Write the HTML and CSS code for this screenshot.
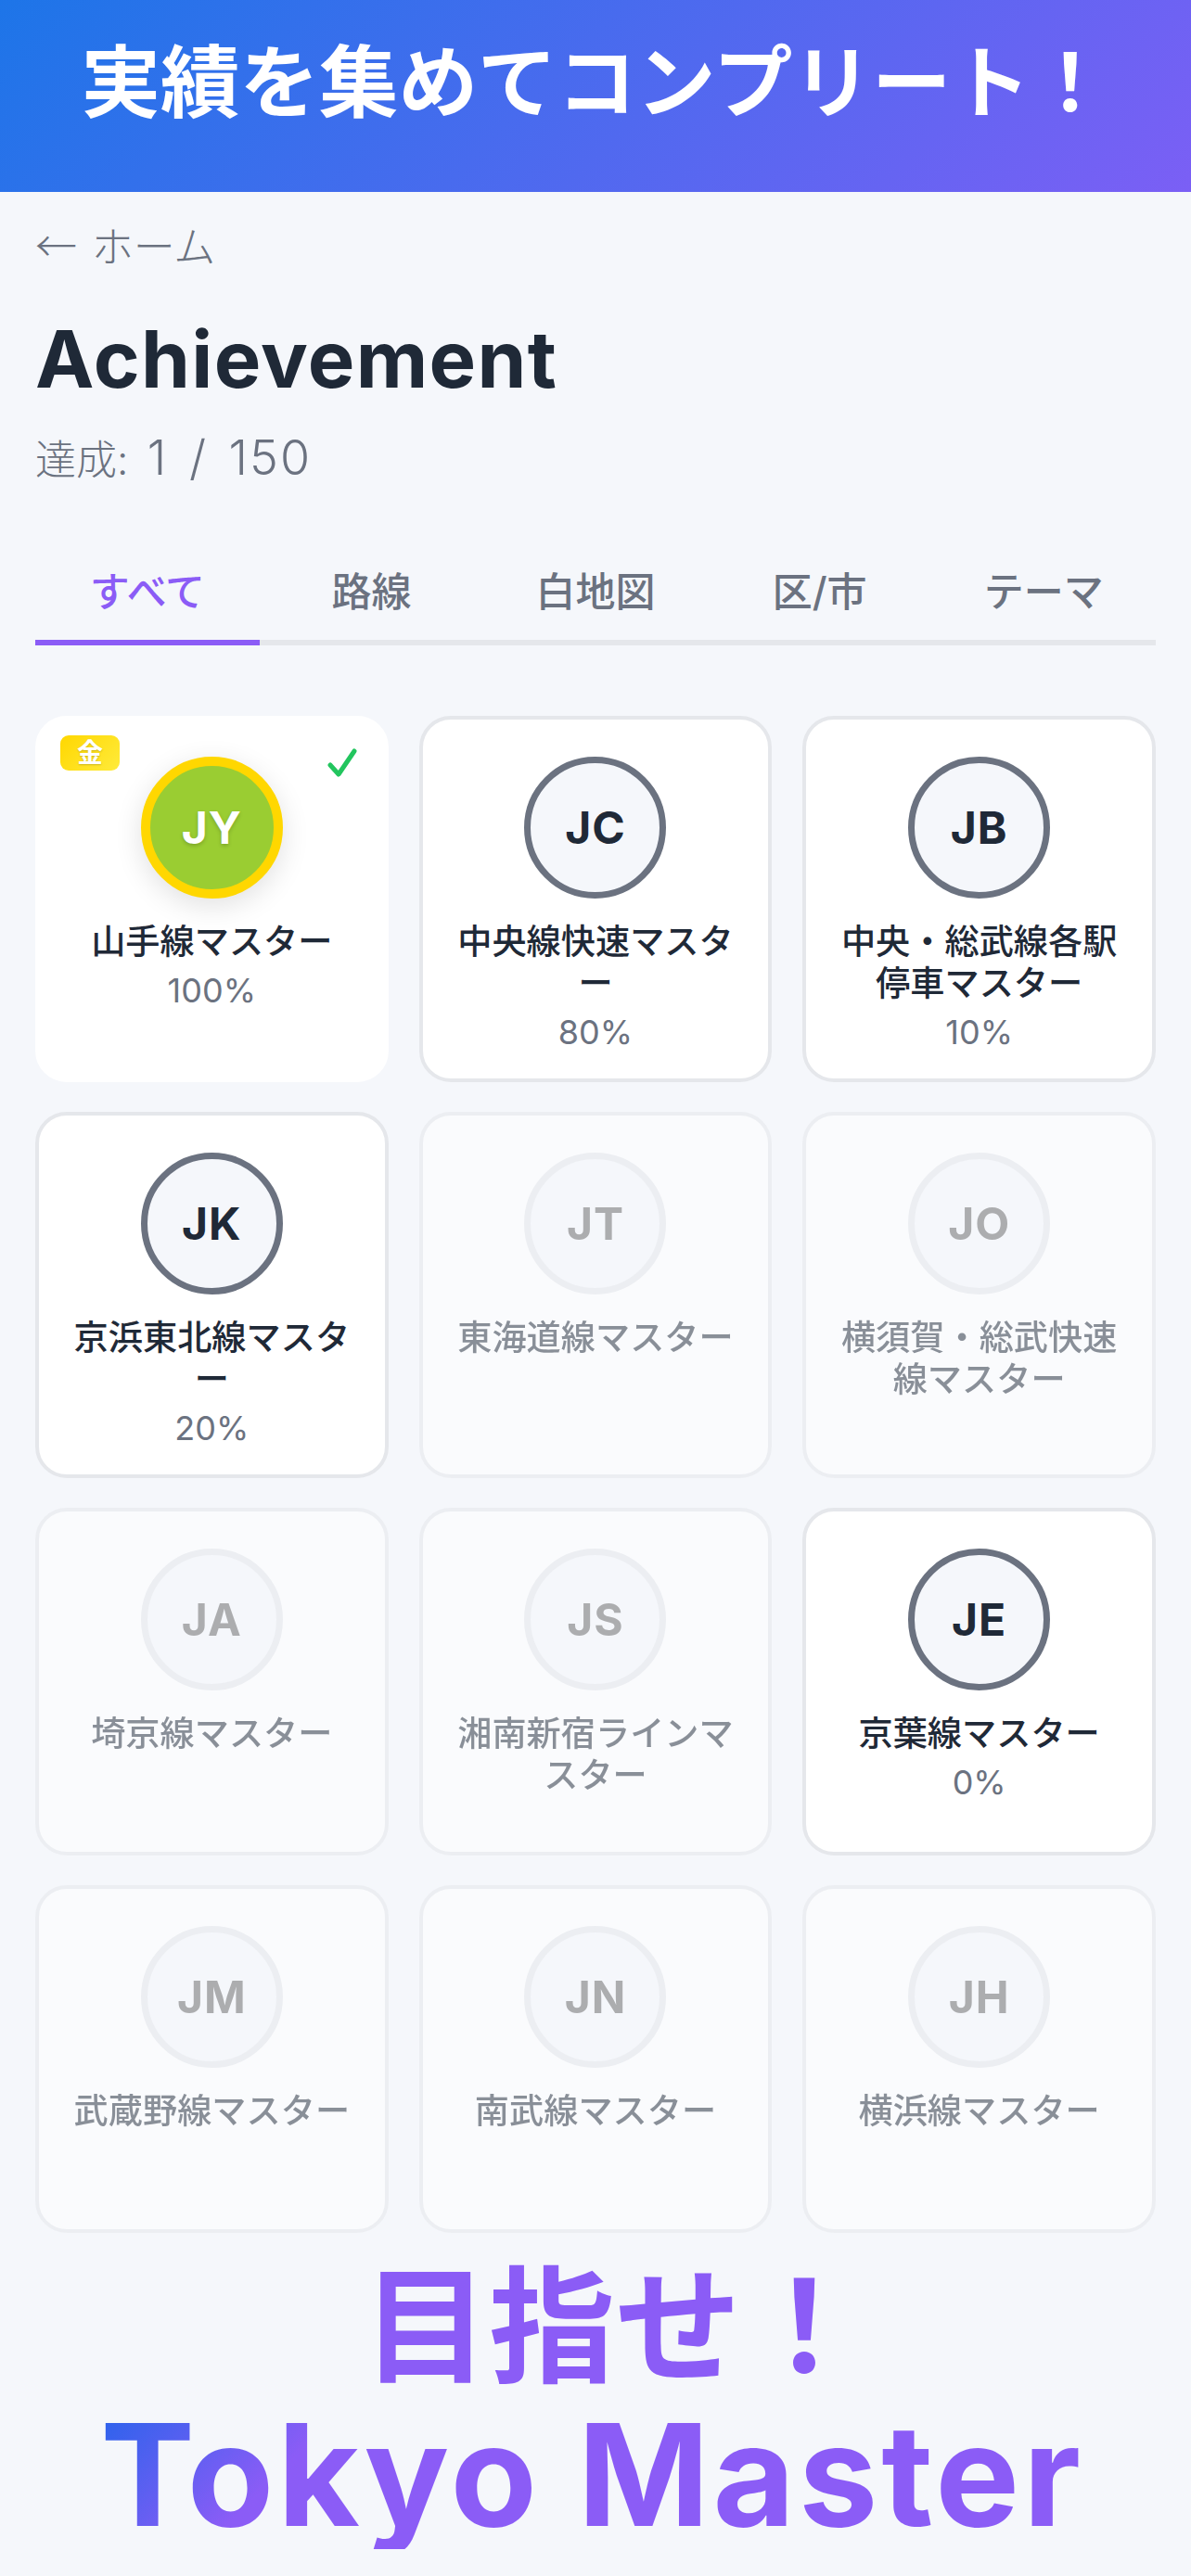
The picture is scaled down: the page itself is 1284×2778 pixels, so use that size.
FILE: index.html
```html
<!DOCTYPE html>
<html lang="ja">
<head>
  <meta charset="UTF-8">
  <meta name="viewport" content="width=device-width, initial-scale=1.0">
  <title>Achievement</title>
  <link rel="stylesheet" href="styles.css">
</head>
<body>
  <header class="banner">実績を集めてコンプリート！</header>

  <main class="content">
    <a class="back" href="#"><span class="back-arrow">←</span> ホーム</a>
    <h1>Achievement</h1>
    <p class="count">達成: <span class="count-num">1 / 150</span></p>

    <nav class="tabs">
      <a class="tab active" href="#">すべて</a>
      <a class="tab" href="#">路線</a>
      <a class="tab" href="#">白地図</a>
      <a class="tab" href="#">区/市</a>
      <a class="tab" href="#">テーマ</a>
    </nav>

    <section class="grid">
      <div class="card done">
        <span class="medal">金</span>
        <svg class="check" viewBox="0 0 32 32"><path d="M3 18l9 10L29 3"/></svg>
        <div class="circle">JY</div>
        <p class="name">山手線マスター</p>
        <p class="percent">100%</p>
      </div>
      <div class="card">
        <div class="circle">JC</div>
        <p class="name">中央線快速マスター</p>
        <p class="percent">80%</p>
      </div>
      <div class="card">
        <div class="circle">JB</div>
        <p class="name">中央・総武線各駅停車マスター</p>
        <p class="percent">10%</p>
      </div>

      <div class="card">
        <div class="circle">JK</div>
        <p class="name">京浜東北線マスター</p>
        <p class="percent">20%</p>
      </div>
      <div class="card locked">
        <div class="circle">JT</div>
        <p class="name">東海道線マスター</p>
      </div>
      <div class="card locked">
        <div class="circle">JO</div>
        <p class="name">横須賀・総武快速線マスター</p>
      </div>

      <div class="card locked">
        <div class="circle">JA</div>
        <p class="name">埼京線マスター</p>
      </div>
      <div class="card locked">
        <div class="circle">JS</div>
        <p class="name">湘南新宿ラインマスター</p>
      </div>
      <div class="card">
        <div class="circle">JE</div>
        <p class="name">京葉線マスター</p>
        <p class="percent">0%</p>
      </div>

      <div class="card locked">
        <div class="circle">JM</div>
        <p class="name">武蔵野線マスター</p>
      </div>
      <div class="card locked">
        <div class="circle">JN</div>
        <p class="name">南武線マスター</p>
      </div>
      <div class="card locked">
        <div class="circle">JH</div>
        <p class="name">横浜線マスター</p>
      </div>
    </section>
  </main>

  <footer class="slogan">
    <div class="slogan-top">目指せ！</div>
    <div class="slogan-bottom">Tokyo Master</div>
  </footer>
</body>
</html>
```

FILE: styles.css
```css
* {
  box-sizing: border-box;
}
body {
  margin: 0;
  height: 2778px;
  overflow: hidden;
  background-color: #f5f7fb;
  color: #1f2937;
  font-family: Inter, "Noto Sans CJK JP", sans-serif;
}
p, h1 {
  margin: 0;
}
.banner {
  height: 207px;
  padding-top: 43px;
  background: linear-gradient(135deg, #1d75e8, #7b5ff5);
  color: white;
  font-size: 85.5px;
  line-height: 92px;
  font-weight: 700;
  text-align: center;
}
.content {
  padding: 0 38px;
}
.back {
  display: block;
  margin-top: 28px;
  color: #6b7280;
  font-size: 45px;
  line-height: 58px;
  font-weight: 300;
  text-decoration: none;
}
.back-arrow {
  margin-right: 3px;
  font-family: "Noto Sans CJK JP", sans-serif;
}
h1 {
  margin-top: 42px;
  font-size: 85px;
  line-height: 100px;
  font-weight: 700;
  letter-spacing: 1.3px;
}
.count {
  margin-top: 27px;
  color: #6b7280;
  font-size: 44px;
  line-height: 58px;
  font-weight: 300;
}
.count-num {
  margin-left: 8px;
  font-size: 52px;
  letter-spacing: 2px;
  word-spacing: 6px;
}
.tabs {
  display: grid;
  grid-template-columns: repeat(5, 1fr);
  margin-top: 71px;
  border-bottom: 6px solid #e5e7eb;
}
.tab {
  height: 94px;
  margin-bottom: -6px;
  padding-top: 13px;
  color: #6b7280;
  font-size: 43px;
  line-height: 58px;
  font-weight: 500;
  text-align: center;
  text-decoration: none;
}
.tab.active {
  height: 100px;
  color: #8b5cf6;
  border-bottom: 6px solid #8b5cf6;
}
.grid {
  display: grid;
  grid-template-columns: repeat(3, 1fr);
  gap: 32px 33px;
  margin-top: 76px;
}
.card {
  position: relative;
  min-height: 375px;
  padding: 40px 24px 27px;
  background-color: white;
  border: 4px solid #e5e7eb;
  border-radius: 34px;
  text-align: center;
}
.card.done {
  border-color: white;
}
.card.locked {
  opacity: 0.5;
}
.circle {
  display: flex;
  align-items: center;
  justify-content: center;
  width: 153px;
  height: 153px;
  margin: 0 auto;
  background-color: #f5f7fb;
  border: 7px solid #6b7280;
  border-radius: 50%;
  font-size: 48px;
  font-weight: 700;
  letter-spacing: 1px;
}
.done .circle {
  background-color: #9acd32;
  border: 10px solid #ffd700;
  box-shadow: 0 8px 30px rgba(0, 0, 0, 0.12);
  color: white;
  text-shadow: 0 2px 4px rgba(0, 0, 0, 0.2);
}
.locked .circle {
  border-color: #e5e7eb;
  color: #666;
}
.name {
  margin-top: 24px;
  font-size: 37.2px;
  line-height: 45px;
  font-weight: 500;
  line-break: anywhere;
}
.percent {
  margin-top: 8px;
  color: #6b7280;
  font-size: 36px;
  line-height: 45px;
  font-weight: 400;
}
.medal {
  position: absolute;
  top: 17px;
  left: 23px;
  width: 64px;
  height: 38px;
  background: linear-gradient(135deg, #ffd700, #ffeb3b);
  border-radius: 9px;
  color: white;
  font-size: 28px;
  line-height: 38px;
  font-weight: 700;
  text-shadow: 0 1px 2px rgba(0, 0, 0, 0.2);
}
.check {
  position: absolute;
  top: 31px;
  right: 30px;
  width: 32px;
  height: 32px;
  fill: none;
  stroke: #22c55e;
  stroke-width: 5;
  stroke-linecap: round;
  stroke-linejoin: round;
}
.slogan {
  margin-top: 26px;
  text-align: center;
  font-weight: 700;
}
.slogan-top {
  padding-left: 42px;
  color: #8b5cf6;
  font-size: 136px;
  line-height: 152px;
}
.slogan-bottom {
  width: fit-content;
  margin: 3px auto 0;
  padding-right: 7px;
  background: linear-gradient(135deg, #2563eb 0%, #8b5cf6 22%);
  -webkit-background-clip: text;
  background-clip: text;
  color: transparent;
  font-size: 152.5px;
  line-height: 160px;
  letter-spacing: 3.8px;
}
```
